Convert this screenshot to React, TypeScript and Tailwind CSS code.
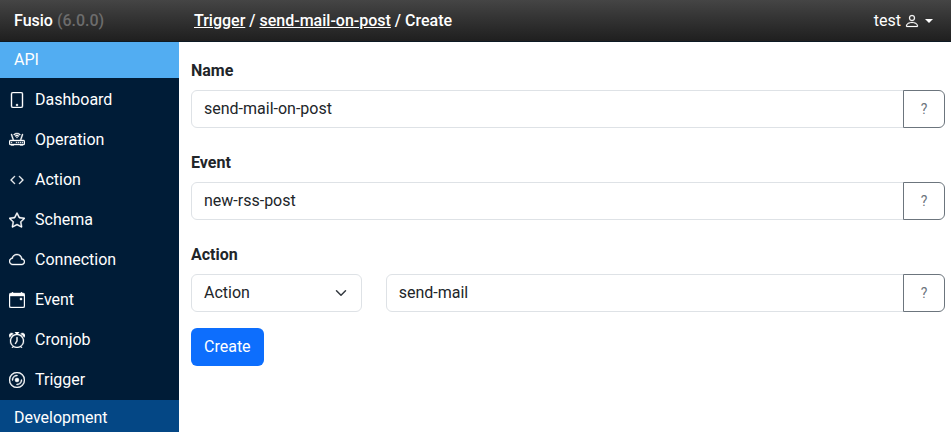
import { BsTablet, BsRouter, BsCode, BsStar, BsCloud, BsCalendarEvent, BsAlarm, BsDisc, BsPerson } from 'react-icons/bs';
import type { ReactNode } from 'react';

const navItems = [
	{ icon: <BsTablet />, name: 'Dashboard' },
	{ icon: <BsRouter />, name: 'Operation' },
	{ icon: <BsCode />, name: 'Action' },
	{ icon: <BsStar />, name: 'Schema' },
	{ icon: <BsCloud />, name: 'Connection' },
	{ icon: <BsCalendarEvent />, name: 'Event' },
	{ icon: <BsAlarm />, name: 'Cronjob' },
	{ icon: <BsDisc />, name: 'Trigger' },
];

const inputClass =
	'h-[38px] min-w-0 flex-1 rounded-l-md border border-[#dee2e6] bg-white px-3 pb-0.5 text-base text-[#212529]';

function HelpButton() {
	return (
		<button className="flex h-[38px] w-[42px] shrink-0 items-center justify-center rounded-r-md border border-[#6c757d] bg-white text-sm text-[#6c757d] -ml-px">
			?
		</button>
	);
}

function Field({ label, last, children }: { label: string; last?: boolean; children: ReactNode }) {
	return (
		<div className={last ? 'mb-4' : 'mb-[23px]'}>
			<label className="mb-[7px] block text-base leading-6 font-bold text-[#212529]">{label}</label>
			<div className="flex">{children}</div>
		</div>
	);
}

export default function App() {
	return (
		<div className="h-[432px] w-[951px] overflow-hidden bg-white font-['Roboto',sans-serif]">
			<header className="flex h-[42px] items-center justify-between border-b border-[#0e1a24] bg-gradient-to-b from-[#454545] to-[#1f1f1f] pr-[18px] pl-3.5 text-base font-medium text-white">
				<div className="flex">
					<div className="w-[180px]">
						Fusio <span className="text-[#6c6c6c]">(6.0.0)</span>
					</div>
					<div>
						<span className="underline">Trigger</span> / <span className="underline">send-mail-on-post</span> / Create
					</div>
				</div>
				<div className="flex items-center font-normal">
					test
					<BsPerson className="ml-[3px] text-base [&_path]:stroke-current [&_path]:stroke-[0.2]" />
					<span className="ml-[5px] border-x-[4.8px] border-t-[4.8px] border-x-transparent border-t-white" />
				</div>
			</header>
			<div className="flex">
				<nav className="h-[390px] w-[179px] shrink-0 bg-[#001c37] text-base text-white">
					<div className="mb-0.5 flex h-9 items-center bg-[#52adf2] pl-3.5">API</div>
					{navItems.map((item) => (
						<div key={item.name} className="flex h-10 items-center pl-[9px]">
							<span className="-mt-px flex w-[26px] text-base [&_path]:stroke-current [&_path]:stroke-[0.4]">{item.icon}</span>
							{item.name}
						</div>
					))}
					<div className="flex h-9 items-center bg-[#044785] pl-3.5">Development</div>
				</nav>
				<main className="min-w-0 flex-1 pt-[17px] pr-1.5 pl-3">
					<Field label="Name">
						<input className={inputClass} defaultValue="send-mail-on-post" />
						<HelpButton />
					</Field>
					<Field label="Event">
						<input className={inputClass} defaultValue="new-rss-post" />
						<HelpButton />
					</Field>
					<Field label="Action" last>
						<div className="mr-6 flex h-[38px] w-[170.67px] shrink-0 items-center justify-between rounded-md border border-[#dee2e6] pr-[14px] pl-3 text-[#212529]">
							Action
							<svg viewBox="0 0 16 16" className="h-3 w-3" fill="none" stroke="#343a40" strokeWidth="2" strokeLinecap="round" strokeLinejoin="round">
								<path d="m2 5 6 6 6-6" />
							</svg>
						</div>
						<input className={inputClass} defaultValue="send-mail" />
						<HelpButton />
					</Field>
					<button className="h-[38px] rounded-md bg-[#0d6efd] px-[13px] text-base text-white">Create</button>
				</main>
			</div>
		</div>
	);
}
